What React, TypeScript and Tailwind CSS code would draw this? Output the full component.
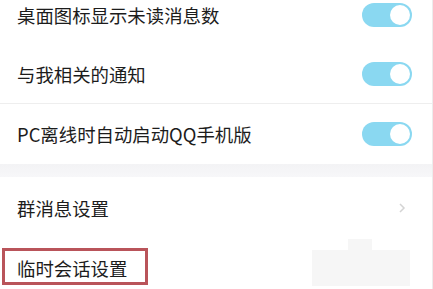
function Toggle() {
  return (
    <div className="relative h-[24px] w-[50px] rounded-full bg-[#8ad8f1]">
      <div className="absolute right-[2px] top-[2px] h-[20px] w-[20px] rounded-full bg-white" />
    </div>
  );
}

function Row({ label, right, className = '' }: { label: React.ReactNode; right?: React.ReactNode; className?: string }) {
  return (
    <div className={`flex items-center justify-between pl-[17px] pr-[20px] ${className}`}>
      <span className="text-[18.4px] leading-none text-[#1c1c1c]">{label}</span>
      {right}
    </div>
  );
}

export default function App() {
  return (
    <div
      className="relative h-[289px] w-[433px] overflow-hidden bg-white"
      style={{ fontFamily: '"Noto Sans CJK SC", "Noto Sans", sans-serif' }}
    >
      <div className="flex h-full flex-col border-r border-[#ececec]">
        <Row className="-mt-[15px] h-[60px] shrink-0" label="桌面图标显示未读消息数" right={<Toggle />} />
        <Row className="h-[58px] shrink-0" label="与我相关的通知" right={<Toggle />} />
        <div className="h-px shrink-0 bg-[#eeeeee]" />
        <Row className="h-[60px] shrink-0" label="PC离线时自动启动QQ手机版" right={<Toggle />} />
        <div className="h-[13px] shrink-0 bg-gradient-to-b from-[#f3f3f5] to-[#f7f7f9]" />
        <Row
          className="h-[62px] shrink-0"
          label="群消息设置"
          right={
            <svg width="8" height="12" viewBox="0 0 8 12" className="mr-[6px]">
              <path d="M2 2l4 4-4 4" fill="none" stroke="#d4d4d4" strokeWidth="1.5" />
            </svg>
          }
        />
        <div className="relative h-[58px] shrink-0">
          <div className="absolute left-[2px] top-[9px] h-[37px] w-[146px] border-[3px] border-[#b9545a]" />
          <Row className="h-full" label="临时会话设置" />
          <div className="absolute left-[312px] top-[11px] h-[36px] w-[98px] bg-[#f6f6f6]" />
          <div className="absolute left-[348px] top-[0px] h-[14px] w-[24px] bg-[#f6f6f6]" />
        </div>
      </div>
    </div>
  );
}
